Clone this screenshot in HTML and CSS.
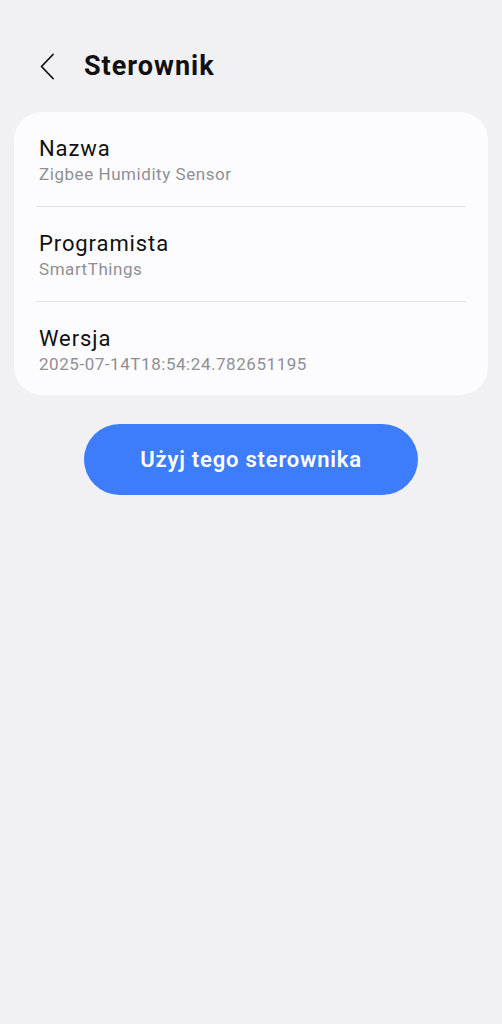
FILE: index.html
```html
<!DOCTYPE html>
<html lang="pl">
<head>
<meta charset="UTF-8">
<meta name="viewport" content="width=device-width, initial-scale=1.0">
<title>Sterownik</title>
<link rel="stylesheet" href="styles.css">
</head>
<body>

<header class="topbar">
    <button class="back" aria-label="Wstecz">
        <svg width="16" height="27" viewBox="0 0 16 27">
            <path d="M14 1.5 L2.5 13.5 L14 25.5" fill="none" stroke="#111" stroke-width="1.8" stroke-linecap="round" stroke-linejoin="round"/>
        </svg>
    </button>
    <h1 class="title">Sterownik</h1>
</header>

<section class="card">
    <div class="row">
        <div class="row-title">Nazwa</div>
        <div class="row-value">Zigbee Humidity Sensor</div>
    </div>
    <div class="divider"></div>
    <div class="row">
        <div class="row-title">Programista</div>
        <div class="row-value">SmartThings</div>
    </div>
    <div class="divider"></div>
    <div class="row last">
        <div class="row-title">Wersja</div>
        <div class="row-value">2025-07-14T18:54:24.782651195</div>
    </div>
</section>

<div class="actions">
    <button class="primary">Użyj tego sterownika</button>
</div>

</body>
</html>
```

FILE: styles.css
```css
body {
    margin: 0;
    font-family: Roboto, "Noto Sans", sans-serif;
    background-color: #f1f0f3;
    color: #111;
    min-height: 1024px;
}
.topbar {
    display: flex;
    align-items: center;
    padding: 34px 0 14px 39px;
    box-sizing: border-box;
    height: 112px;
}
.back {
    background: none;
    border: none;
    padding: 0;
    width: 45px;
    height: 27px;
    display: flex;
    align-items: center;
    cursor: pointer;
}
.title {
    margin: 0;
    font-size: 27px;
    font-weight: 700;
    letter-spacing: 1px;
    line-height: 32px;
}
.card {
    margin: 0 14px;
    background-color: #fcfcfe;
    border-radius: 28px;
}
.row {
    padding: 23px 24px 21px 25px;
}
.row.last {
    padding-bottom: 20px;
}
.row-title {
    font-size: 22px;
    line-height: 28px;
    letter-spacing: 0.9px;
    color: #111;
}
.row-value {
    font-size: 17px;
    line-height: 22px;
    letter-spacing: 0.55px;
    color: #8f8f94;
}
.divider {
    height: 1px;
    margin: 0 22px;
    background-color: #e2e2e6;
}
.actions {
    display: flex;
    justify-content: center;
    padding-top: 29px;
}
.primary {
    width: 334px;
    height: 71px;
    border: none;
    border-radius: 36px;
    background-color: #3d7cfa;
    color: #fff;
    font-family: Roboto, "Noto Sans", sans-serif;
    font-size: 22px;
    font-weight: 600;
    letter-spacing: 0.8px;
    cursor: pointer;
}
```
